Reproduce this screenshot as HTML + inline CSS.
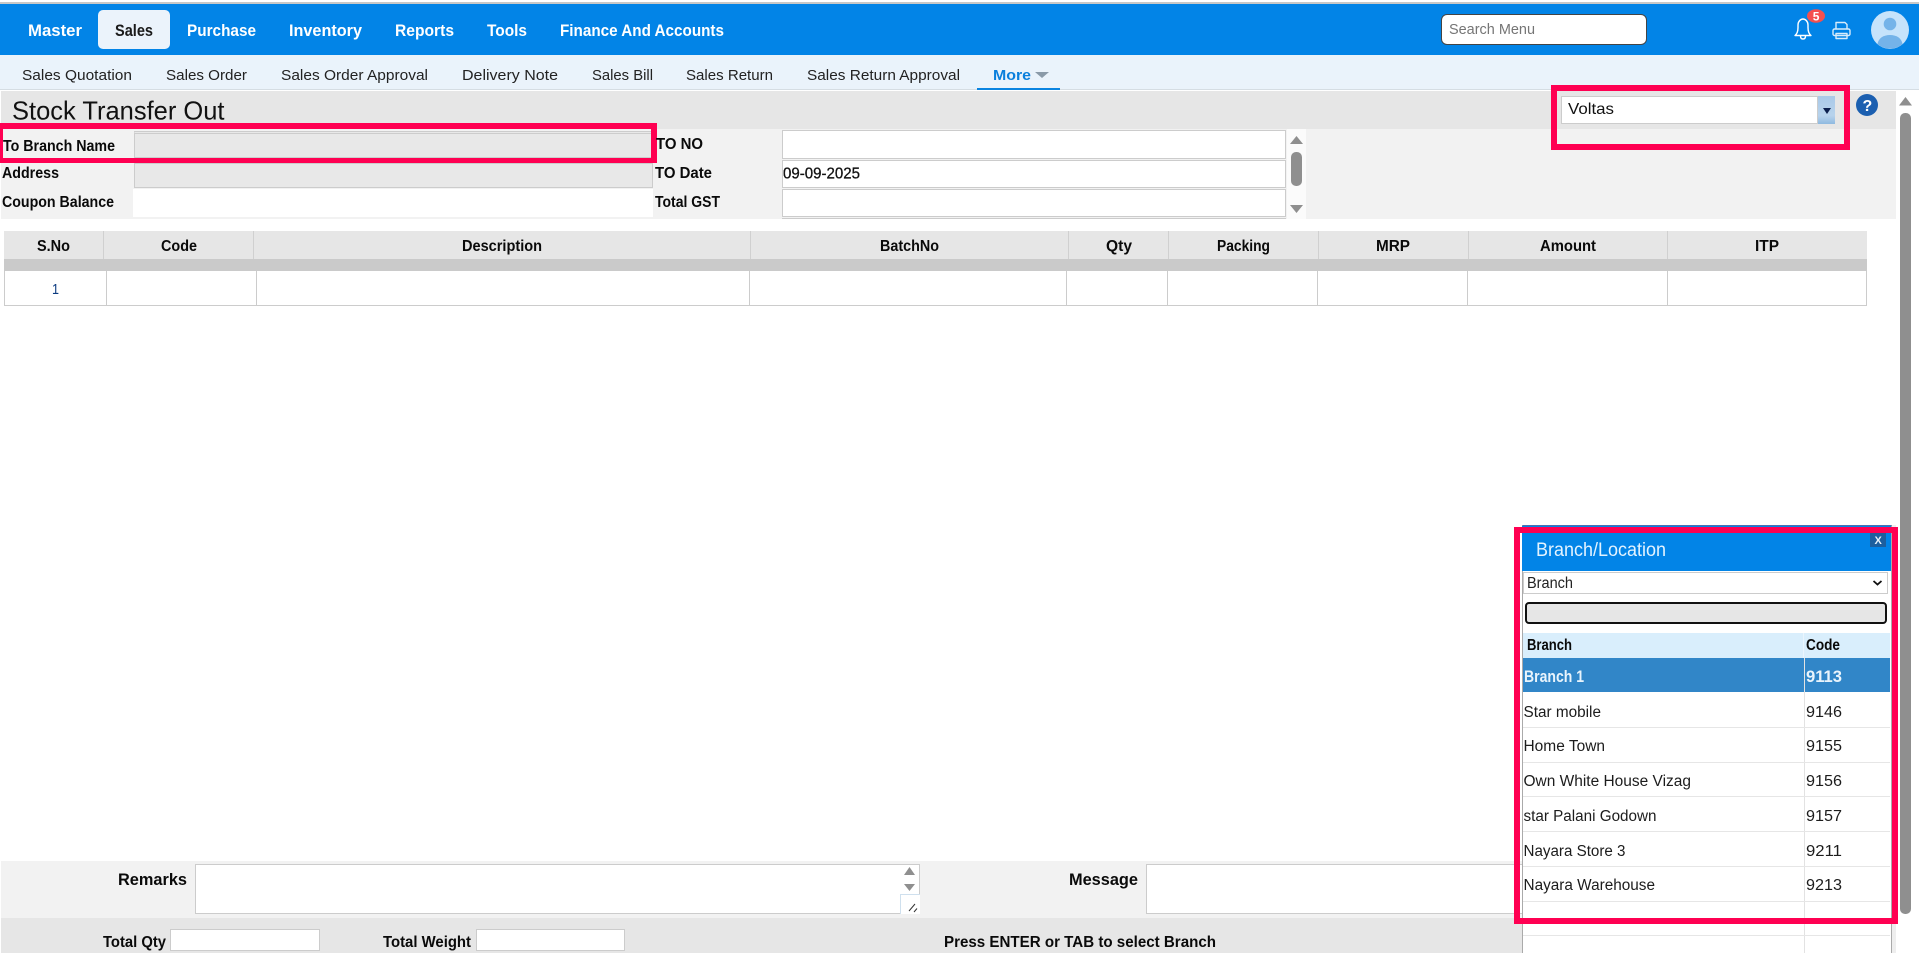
<!DOCTYPE html>
<html lang="en"><head><meta charset="utf-8"><title>Stock Transfer Out</title>
<style>
html,body{margin:0;padding:0;width:1919px;height:953px;overflow:hidden;background:#fff}
#p{position:relative;width:1919px;height:953px;overflow:hidden}
#p div{position:absolute;box-sizing:border-box}
.in{background:#fff;border:1px solid #ccc}
.g{background:#e8e8e8;border:1px solid #ccc}
.v{background:#ccc;width:1px}
.vh{background:#d0d0d0;width:1px;top:231px;height:28px}
.vr{background:#ccc;width:1px;top:271px;height:34px}
.l{background:#e6e6e6;left:1523px;width:367px;height:1px}
.red{border-style:solid;border-color:#ff0052}
svg{position:absolute;left:0;top:0}
text{font-family:"Liberation Sans",sans-serif;fill:#111}
.n{font-size:17px;font-weight:bold;fill:#fff}
.s{font-size:15px;fill:#222}
.b{font-size:15.5px;font-weight:bold;fill:#0a0a0a}
.r{font-size:15.5px;fill:#1c1c1c}
</style></head><body><div id="p">
<div style="left:0;top:2px;width:1919px;height:2px;background:#c8c8c8"></div>
<div style="left:0;top:4px;width:1919px;height:51px;background:#0284e7"></div>
<div style="left:98px;top:10px;width:72px;height:39px;background:#ebf3fb;border-radius:5px"></div>
<div style="left:0;top:55px;width:1919px;height:34px;background:#eaf3fb"></div>
<div style="left:0;top:89px;width:1919px;height:1px;background:#d5dde3"></div>
<div style="left:977px;top:88px;width:83px;height:2px;background:#0a84e0"></div>
<div style="left:1441px;top:14px;width:206px;height:31px;background:#fff;border:1px solid #444;border-radius:6px"></div>

<div style="left:1px;top:91px;width:1895px;height:38px;background:#e6e6e6"></div>
<div style="left:1px;top:129px;width:1895px;height:90px;background:#f2f2f2"></div>
<div class="g" style="left:134px;top:131px;width:519px;height:27px;border-top:3px double #ccc"></div>
<div class="g" style="left:134px;top:163px;width:519px;height:25px"></div>
<div style="left:133px;top:189px;width:520px;height:28px;background:#fff"></div>
<div class="in" style="left:782px;top:130px;width:504px;height:29px"></div>
<div class="in" style="left:782px;top:160px;width:504px;height:28px"></div>
<div class="in" style="left:782px;top:189px;width:504px;height:28px"></div>
<div style="left:782px;top:218px;width:504px;height:1px;background:#ccc"></div>
<div style="left:1287px;top:129px;width:19px;height:90px;background:#fbfbfb"></div>
<div style="left:1291px;top:152px;width:11px;height:34px;background:#8f8f8f;border-radius:5px"></div>

<div style="left:1561px;top:96px;width:257px;height:28px;background:#fff;border:1px solid #ccc"></div>
<div style="left:1818px;top:96px;width:17px;height:28px;background:linear-gradient(#a9c9e8,#b8d3ec 70%,#8fb9e0)"></div>

<div style="left:4px;top:231px;width:1863px;height:28px;background:#e6e6e6"></div>
<div style="left:4px;top:259px;width:1863px;height:12px;background:#cacaca"></div>
<div class="vh" style="left:103px"></div><div class="vh" style="left:253px"></div><div class="vh" style="left:750px"></div><div class="vh" style="left:1068px"></div><div class="vh" style="left:1168px"></div><div class="vh" style="left:1318px"></div><div class="vh" style="left:1468px"></div><div class="vh" style="left:1667px"></div>
<div class="vr" style="left:4px"></div><div class="vr" style="left:106px"></div><div class="vr" style="left:256px"></div><div class="vr" style="left:749px"></div><div class="vr" style="left:1066px"></div><div class="vr" style="left:1167px"></div><div class="vr" style="left:1317px"></div><div class="vr" style="left:1467px"></div><div class="vr" style="left:1667px"></div><div class="vr" style="left:1866px"></div>
<div style="left:4px;top:305px;width:1863px;height:1px;background:#ccc"></div>

<div style="left:1px;top:861px;width:1521px;height:57px;background:#f2f2f2"></div>
<div style="left:1px;top:918px;width:1521px;height:35px;background:#e6e6e6"></div>
<div class="in" style="left:195px;top:864px;width:725px;height:50px"></div>
<div style="left:900px;top:894px;width:20px;height:20px;background:#fff;border-left:1px solid #cfe0ee;border-top:1px solid #cfe0ee"></div>
<div class="in" style="left:1146px;top:864px;width:380px;height:50px"></div>
<div class="in" style="left:170px;top:929px;width:150px;height:22px"></div>
<div class="in" style="left:476px;top:929px;width:149px;height:22px"></div>

<div style="left:1892px;top:525px;width:4px;height:428px;background:#eee"></div>
<div style="left:1522px;top:525px;width:370px;height:428px;background:#fff;border:1px solid #aaa;border-top:1px solid #4a6fb0;border-bottom:0"></div>
<div style="left:1522px;top:526px;width:369px;height:45px;background:#0284e7"></div>
<div style="left:1870px;top:533px;width:16px;height:14px;background:#1c5f9f"></div>
<div style="left:1523px;top:572px;width:365px;height:22px;background:#fff;border:1px solid #ccc"></div>
<div style="left:1525px;top:602px;width:362px;height:22px;background:#e6e6e6;border:2px solid #111;border-radius:4px"></div>
<div style="left:1523px;top:633px;width:367px;height:25px;background:#d9eefc"></div>
<div style="left:1803px;top:633px;width:1px;height:25px;background:#eaf5fd"></div>
<div style="left:1523px;top:658px;width:367px;height:34px;background:#3186c8"></div>
<div style="left:1804px;top:658px;width:1px;height:295px;background:#e2e2e2"></div>
<div class="l" style="top:727px"></div><div class="l" style="top:762px"></div><div class="l" style="top:796px"></div><div class="l" style="top:831px"></div><div class="l" style="top:866px"></div><div class="l" style="top:901px"></div><div class="l" style="top:935px"></div>

<div style="left:1896px;top:91px;width:23px;height:22px;background:#fff"></div>
<div style="left:1900px;top:113px;width:11px;height:801px;background:#8f8f8f;border-radius:5px"></div>

<div class="red" style="left:0;top:123px;width:657px;height:40px;border-width:6px 6px 5px 3px"></div>
<div class="red" style="left:1551px;top:85px;width:299px;height:65px;border-width:6px"></div>
<div class="red" style="left:1514px;top:527px;width:384px;height:397px;border-width:6px"></div>

<svg width="1919" height="953" viewBox="0 0 1919 953" xmlns="http://www.w3.org/2000/svg">
<g class="nav">
<text class="n" x="28" y="36" textLength="54" lengthAdjust="spacingAndGlyphs">Master</text>
<text class="n" style="fill:#1a1a1a" x="115" y="36" textLength="38" lengthAdjust="spacingAndGlyphs">Sales</text>
<text class="n" x="187" y="36" textLength="69" lengthAdjust="spacingAndGlyphs">Purchase</text>
<text class="n" x="289" y="36" textLength="73" lengthAdjust="spacingAndGlyphs">Inventory</text>
<text class="n" x="395" y="36" textLength="59" lengthAdjust="spacingAndGlyphs">Reports</text>
<text class="n" x="487" y="36" textLength="40" lengthAdjust="spacingAndGlyphs">Tools</text>
<text class="n" x="560" y="36" textLength="164" lengthAdjust="spacingAndGlyphs">Finance And Accounts</text>
<text x="1449" y="34" font-size="15" style="fill:#757575" textLength="86" lengthAdjust="spacingAndGlyphs">Search Menu</text>
</g>
<g fill="none" stroke="#fff" stroke-width="1.4" stroke-linejoin="round">
<path d="M1795 35.5c2-1.500 3-4 3-8v-2.500c0-3.600 2.700-6 5-6s5 2.400 5 6v2.500c0 4 1 6.500 3 8z"/>
<path d="M1800.500 36c0 2 1.100 3 2.500 3s2.500-1 2.500-3"/>
</g>
<ellipse cx="1816" cy="16" rx="9" ry="6.700" fill="#f4504f"/>
<text x="1812.800" y="20.500" font-size="12" font-weight="bold" style="fill:#fff">5</text>
<g fill="none" stroke="#d8ecfb" stroke-width="1.400" stroke-linejoin="round">
<path d="M1836 29v-6.500h9l2 2v4.500"/>
<rect x="1833" y="29" width="17" height="6.500" rx="1.500"/>
<path d="M1836 33.500v5h11v-5z"/>
</g>
<circle cx="1890" cy="30" r="19" fill="#c6e3fb"/>
<circle cx="1890" cy="24" r="6.300" fill="#74b3e9"/>
<path d="M1877.500 44c1-6 6-9 12.500-9s11.500 3 12.500 9a19 19 0 0 1-25 0z" fill="#74b3e9"/>

<g class="sub">
<text class="s" x="22" y="80" textLength="110" lengthAdjust="spacingAndGlyphs">Sales Quotation</text>
<text class="s" x="166" y="80" textLength="81" lengthAdjust="spacingAndGlyphs">Sales Order</text>
<text class="s" x="281" y="80" textLength="147" lengthAdjust="spacingAndGlyphs">Sales Order Approval</text>
<text class="s" x="462" y="80" textLength="96" lengthAdjust="spacingAndGlyphs">Delivery Note</text>
<text class="s" x="592" y="80" textLength="61" lengthAdjust="spacingAndGlyphs">Sales Bill</text>
<text class="s" x="686" y="80" textLength="87" lengthAdjust="spacingAndGlyphs">Sales Return</text>
<text class="s" x="807" y="80" textLength="153" lengthAdjust="spacingAndGlyphs">Sales Return Approval</text>
<text class="s" style="fill:#0a7fdc;font-weight:bold" x="993" y="80" textLength="38" lengthAdjust="spacingAndGlyphs">More</text>
<path d="M1035 72h14l-7 6z" fill="#8a9aa8"/>
</g>

<text x="12" y="119.500" font-size="26" style="fill:#111" textLength="212.500" lengthAdjust="spacingAndGlyphs">Stock Transfer Out</text>
<text class="b" x="3" y="151" textLength="112" lengthAdjust="spacingAndGlyphs">To Branch Name</text>
<text class="b" x="2" y="178" textLength="57" lengthAdjust="spacingAndGlyphs">Address</text>
<text class="b" x="2" y="207" textLength="112" lengthAdjust="spacingAndGlyphs">Coupon Balance</text>
<text class="b" x="656" y="149" textLength="47" lengthAdjust="spacingAndGlyphs">TO NO</text>
<text class="b" x="655" y="178" textLength="57" lengthAdjust="spacingAndGlyphs">TO Date</text>
<text class="b" x="655" y="207" textLength="65" lengthAdjust="spacingAndGlyphs">Total GST</text>
<text x="783" y="178.500" font-size="15.500" style="fill:#111;stroke:#111;stroke-width:.3px" textLength="77" lengthAdjust="spacingAndGlyphs">09-09-2025</text>
<path d="M1290 144l6.500-8 6.500 8zM1290 205l6.500 8 6.500-8z" fill="#8f8f8f"/>
<path d="M1899 105.500l6.500-8.500 6.500 8.500z" fill="#8f8f8f"/>
<text x="1568" y="114" font-size="16" style="fill:#111" textLength="46" lengthAdjust="spacingAndGlyphs">Voltas</text>
<path d="M1823 108h8l-4 6z" fill="#0b1f4d"/>
<circle cx="1867" cy="105" r="11" fill="#1b5fb0"/>
<text x="1862.500" y="111" font-size="16" font-weight="bold" style="fill:#fff">?</text>

<g class="th">
<text class="b" x="37" y="251" textLength="33" lengthAdjust="spacingAndGlyphs">S.No</text>
<text class="b" x="161" y="251" textLength="36" lengthAdjust="spacingAndGlyphs">Code</text>
<text class="b" x="462" y="251" textLength="80" lengthAdjust="spacingAndGlyphs">Description</text>
<text class="b" x="880" y="251" textLength="59" lengthAdjust="spacingAndGlyphs">BatchNo</text>
<text class="b" x="1106" y="251" textLength="26" lengthAdjust="spacingAndGlyphs">Qty</text>
<text class="b" x="1217" y="251" textLength="53" lengthAdjust="spacingAndGlyphs">Packing</text>
<text class="b" x="1376" y="251" textLength="34" lengthAdjust="spacingAndGlyphs">MRP</text>
<text class="b" x="1540" y="251" textLength="56" lengthAdjust="spacingAndGlyphs">Amount</text>
<text class="b" x="1755" y="251" textLength="24" lengthAdjust="spacingAndGlyphs">ITP</text>
</g>
<text x="52" y="294" font-size="15" style="fill:#0b3a80" textLength="7" lengthAdjust="spacingAndGlyphs">1</text>

<text class="b" x="118" y="885" style="font-size:16.500px" textLength="69" lengthAdjust="spacingAndGlyphs">Remarks</text>
<text class="b" x="1069" y="885" style="font-size:16.500px" textLength="69" lengthAdjust="spacingAndGlyphs">Message</text>
<path d="M904 875l5.500-8 5.500 8zM904 884l5.500 7 5.500-7z" fill="#8f8f8f"/>
<path d="M909 911l6-7M914 912l3-3.500" stroke="#333" stroke-width="1" fill="none"/>
<text class="b" x="103" y="947" textLength="63" lengthAdjust="spacingAndGlyphs">Total Qty</text>
<text class="b" x="383" y="947" textLength="88" lengthAdjust="spacingAndGlyphs">Total Weight</text>
<text class="b" x="944" y="947" textLength="272" lengthAdjust="spacingAndGlyphs">Press ENTER or TAB to select Branch</text>

<text x="1536" y="556" font-size="19" style="fill:#e3f3ff" textLength="130" lengthAdjust="spacingAndGlyphs">Branch/Location</text>
<text x="1874.500" y="544" font-size="11" font-weight="bold" style="fill:#e8f2fb">X</text>
<text x="1527" y="588" font-size="15.500" style="fill:#222" textLength="46" lengthAdjust="spacingAndGlyphs">Branch</text>
<path d="M1873.500 581l4 3.500 4-3.500" stroke="#111" stroke-width="1.800" fill="none"/>
<text class="b" x="1527" y="650" textLength="45" lengthAdjust="spacingAndGlyphs">Branch</text>
<text class="b" x="1806" y="650" textLength="34" lengthAdjust="spacingAndGlyphs">Code</text>
<text class="b" style="fill:#e9f4fc;font-size:16.500px" x="1524" y="682" textLength="60" lengthAdjust="spacingAndGlyphs">Branch 1</text>
<text class="b" style="fill:#e9f4fc;font-size:16.500px" x="1806" y="682" textLength="36" lengthAdjust="spacingAndGlyphs">9113</text>
<text class="r" x="1523.500" y="717" textLength="77.500" lengthAdjust="spacingAndGlyphs">Star mobile</text><text class="r" x="1806" y="717" textLength="36" lengthAdjust="spacingAndGlyphs">9146</text>
<text class="r" x="1523.500" y="751" textLength="81.500" lengthAdjust="spacingAndGlyphs">Home Town</text><text class="r" x="1806" y="751" textLength="36" lengthAdjust="spacingAndGlyphs">9155</text>
<text class="r" x="1523.500" y="786" textLength="167.500" lengthAdjust="spacingAndGlyphs">Own White House Vizag</text><text class="r" x="1806" y="786" textLength="36" lengthAdjust="spacingAndGlyphs">9156</text>
<text class="r" x="1523.500" y="821" textLength="133" lengthAdjust="spacingAndGlyphs">star Palani Godown</text><text class="r" x="1806" y="821" textLength="36" lengthAdjust="spacingAndGlyphs">9157</text>
<text class="r" x="1523.500" y="856" textLength="102" lengthAdjust="spacingAndGlyphs">Nayara Store 3</text><text class="r" x="1806" y="856" textLength="36" lengthAdjust="spacingAndGlyphs">9211</text>
<text class="r" x="1523.500" y="890" textLength="131.500" lengthAdjust="spacingAndGlyphs">Nayara Warehouse</text><text class="r" x="1806" y="890" textLength="36" lengthAdjust="spacingAndGlyphs">9213</text>
</svg>
</div></body></html>
